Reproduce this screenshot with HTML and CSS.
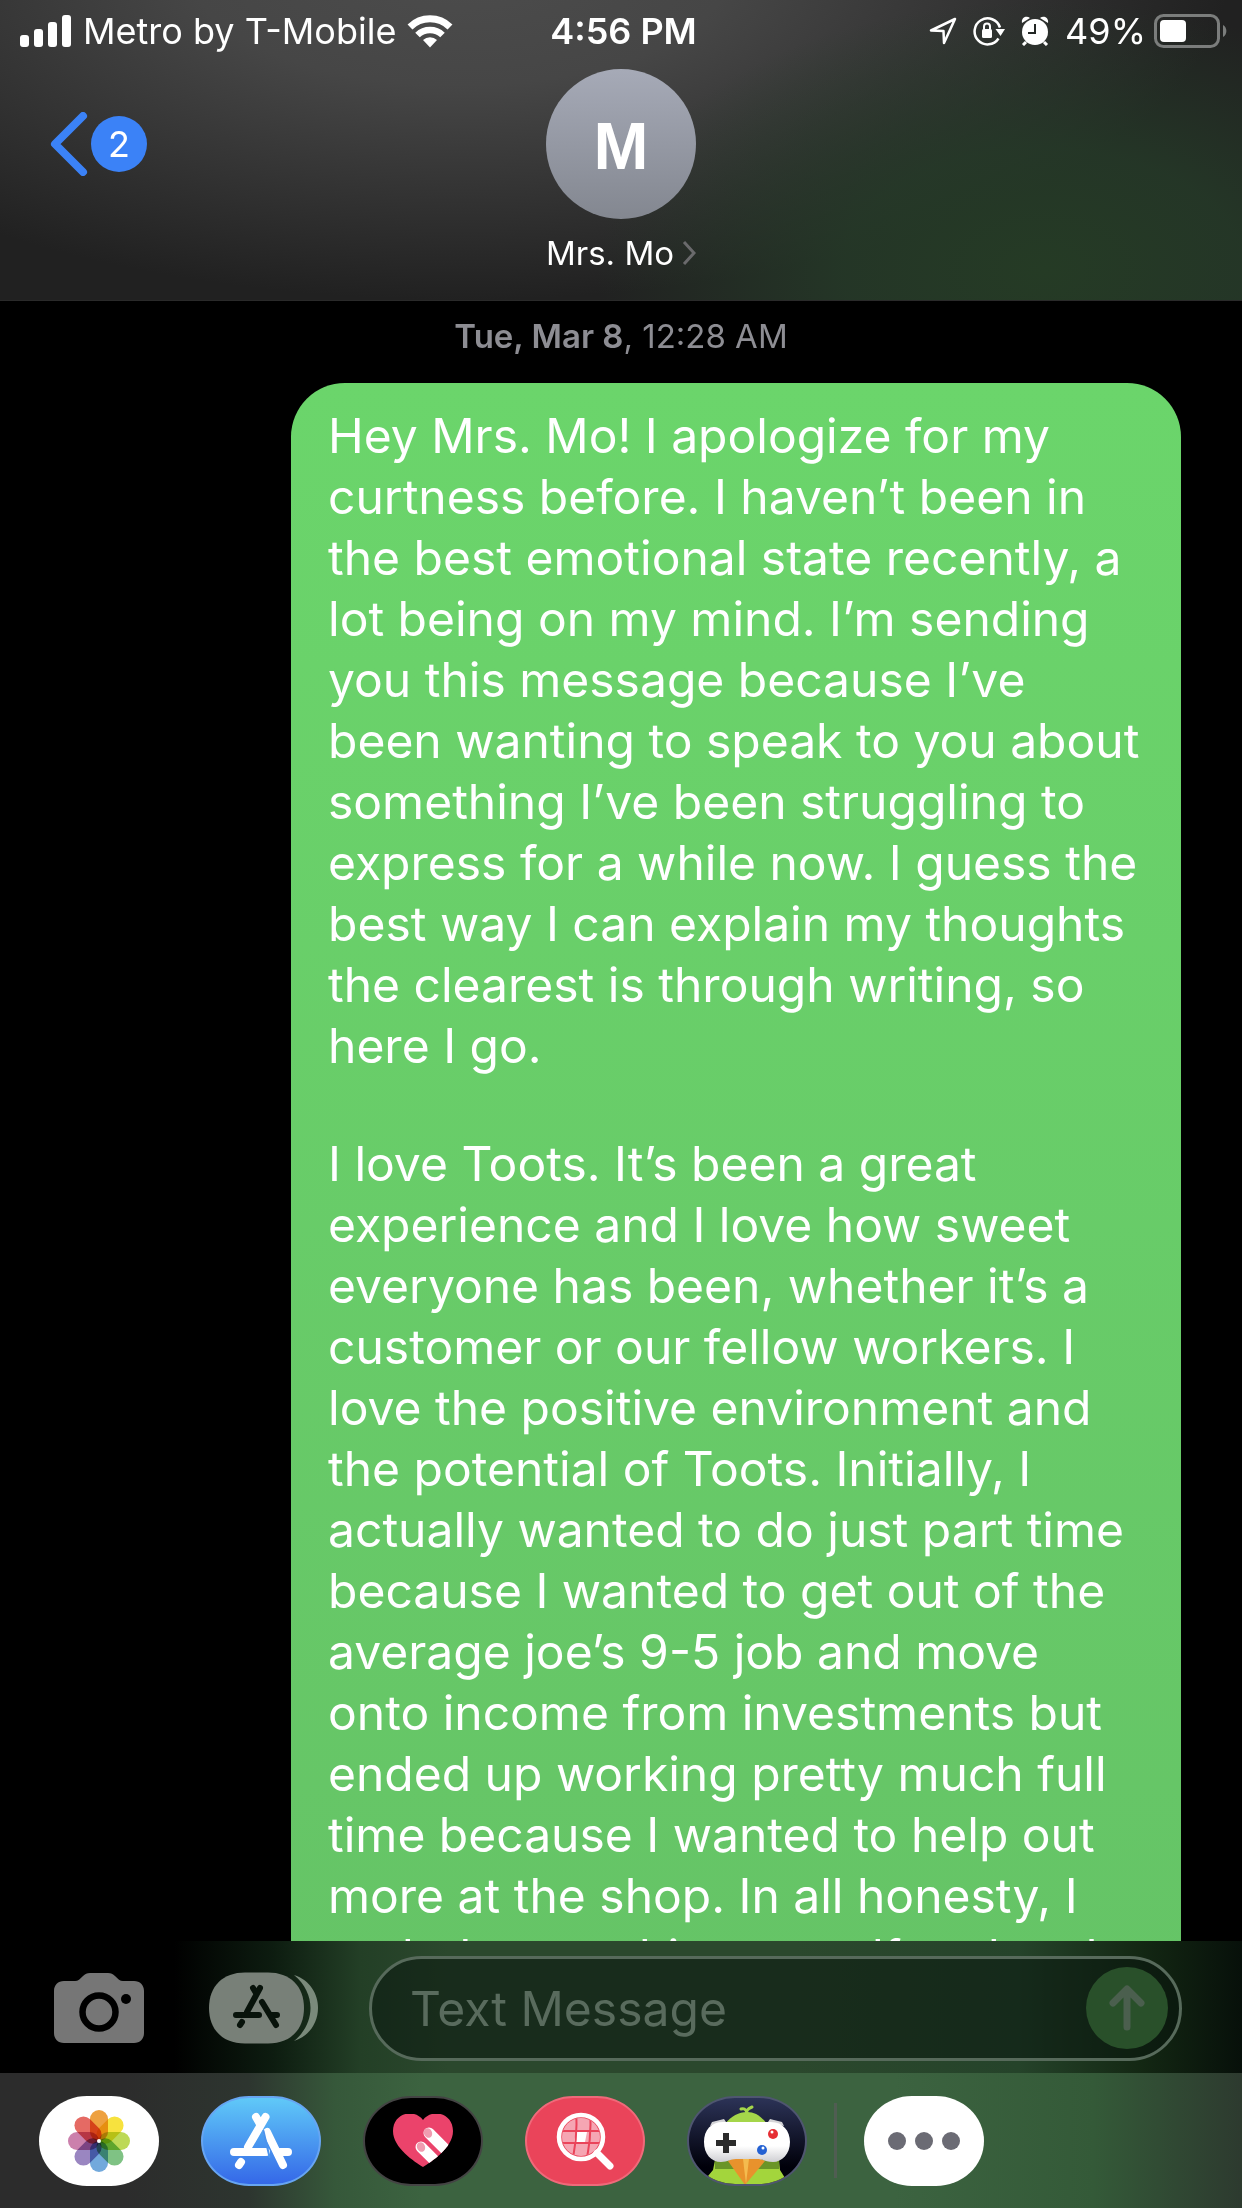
FILE: index.html
```
<!DOCTYPE html>
<html lang="en">
<head>
    <meta charset="UTF-8">
    <meta name="viewport" content="width=device-width, initial-scale=1.0">
    <title>Mrs. Mo</title>
    <link rel="stylesheet" href="styles.css">
</head>
<body>
    <!-- Header -->
    <header class="header">
        <div class="status-bar">
            <div class="status-left">
                <svg width="52" height="32" viewBox="0 0 52 32" fill="#fff">
                    <rect x="0" y="20" width="9" height="12" rx="3"/>
                    <rect x="14" y="14" width="9" height="18" rx="3"/>
                    <rect x="28" y="7" width="9" height="25" rx="3"/>
                    <rect x="42" y="0" width="9" height="32" rx="3"/>
                </svg>
                <span>Metro by T-Mobile</span>
                <svg width="46" height="34" viewBox="0 0 46 34">
                    <path d="M3 13a28.500 28.500 0 0 1 40 0" fill="none" stroke="#fff" stroke-width="7"/>
                    <path d="M10.500 21a18 18 0 0 1 25 0" fill="none" stroke="#fff" stroke-width="6.500"/>
                    <path d="M16 26a10.500 10.500 0 0 1 14 0l-7 7.500z" fill="#fff"/>
                </svg>
            </div>
            <div class="status-time">4:56 PM</div>
            <div class="status-right">
                <svg width="28" height="28" viewBox="0 0 28 28" fill="none" stroke="#fff" stroke-width="2.500" stroke-linejoin="round">
                    <path d="M26 2L2 13.500l12.500.5.500 12z"/>
                </svg>
                <svg width="32" height="30" viewBox="0 0 32 30">
                    <path d="M25.500 22.500a13 13 0 1 1 1.500-11" fill="none" stroke="#fff" stroke-width="2.500"/>
                    <path d="M22.500 13h9.500l-4.500 7z" fill="#fff"/>
                    <rect x="9" y="13" width="10" height="9" rx="1.500" fill="#fff"/>
                    <path d="M11 13v-2.500a3 3 0 0 1 6 0V13" fill="none" stroke="#fff" stroke-width="2"/>
                </svg>
                <svg width="28" height="30" viewBox="0 0 28 30">
                    <circle cx="14" cy="16" r="13" fill="#fff"/>
                    <path d="M1 7C0 2 5-1 9 2zM27 7c1-5-4-8-8-5z" fill="#fff"/>
                    <path d="M5 26l-3 3M23 26l3 3" stroke="#fff" stroke-width="3"/>
                    <path d="M14 8v9H7" fill="none" stroke="#222624" stroke-width="2"/>
                </svg>
                <span>49%</span>
                <svg class="battery" width="73" height="34" viewBox="0 0 73 34">
                    <rect x="1.500" y="1.500" width="63" height="31" rx="8" fill="none" stroke="#7b7d7c" stroke-width="3"/>
                    <rect x="6" y="6" width="26" height="22" rx="4" fill="#fff"/>
                    <path d="M69 11a7 7 0 0 1 0 12z" fill="#7b7d7c"/>
                </svg>
            </div>
        </div>
        <div class="nav">
            <a class="back" href="#" aria-label="Back">
                <svg width="38" height="64" viewBox="0 0 38 64" fill="none" stroke="#3b82f7" stroke-width="8" stroke-linecap="round" stroke-linejoin="round">
                    <path d="M33 4L5 32l28 28"/>
                </svg>
                <span class="unread">2</span>
            </a>
            <a class="contact" href="#">
                <span class="avatar">M</span>
                <span class="contact-name">Mrs. Mo
                    <svg width="14" height="24" viewBox="0 0 14 24" fill="none" stroke="#6a6a6c" stroke-width="3">
                        <path d="M2 1l10 11L2 23"/>
                    </svg>
                </span>
            </a>
        </div>
    </header>

    <!-- Conversation -->
    <main class="conversation">
        <div class="date"><b>Tue, Mar 8</b>, 12:28 AM</div>
        <div class="bubble">
            <p>Hey Mrs. Mo! I apologize for my<br>
            curtness before. I haven’t been in<br>
            the best emotional state recently, a<br>
            lot being on my mind. I’m sending<br>
            you this message because I’ve<br>
            been wanting to speak to you about<br>
            something I’ve been struggling to<br>
            express for a while now. I guess the<br>
            best way I can explain my thoughts<br>
            the clearest is through writing, so<br>
            here I go.</p>
            <p>I love Toots. It’s been a great<br>
            experience and I love how sweet<br>
            everyone has been, whether it’s a<br>
            customer or our fellow workers. I<br>
            love the positive environment and<br>
            the potential of Toots. Initially, I<br>
            actually wanted to do just part time<br>
            because I wanted to get out of the<br>
            average joe’s 9-5 job and move<br>
            onto income from investments but<br>
            ended up working pretty much full<br>
            time because I wanted to help out<br>
            more at the shop. In all honesty, I<br>
            ended up pushing myself and took</p>
        </div>
    </main>

    <!-- Message box -->
    <form class="compose">
        <button class="tool" type="button" aria-label="Camera">
            <svg width="90" height="70" viewBox="0 0 90 70">
                <path d="M10 8h11c3 0 5-2 8-5 2-2 4-3 7-3h18c3 0 5 1 7 3 3 3 5 5 8 5h11c6 0 10 4 10 10v42c0 6-4 10-10 10H10C4 70 0 66 0 60V18C0 12 4 8 10 8z" fill="#767676"/>
                <circle cx="45" cy="39" r="16.500" fill="none" stroke="#000" stroke-width="6.500"/>
                <circle cx="72" cy="26" r="5" fill="#000"/>
            </svg>
        </button>
        <button class="tool" type="button" aria-label="Apps">
            <svg width="110" height="72" viewBox="0 0 110 72">
                <path d="M36 .500h23C81 .500 95 14 95 36S81 71.500 59 71.500H36C14 71.500 0 58 0 36S14 .500 36 .500z" fill="#788078"/>
                <path d="M85 3c32 10 32 56 0 66 22-18 22-48 0-66z" fill="#7a8a7b"/>
                <g fill="none" stroke="#08130b" stroke-linecap="round" stroke-width="6">
                    <path d="M51 16L38 40M44 16l3 5M27 43h23M62 43h6M33 50l-2 3"/>
                    <path d="M53 30l14 23"/>
                </g>
            </svg>
        </button>
        <div class="field">
            <input type="text" placeholder="Text Message" aria-label="Text Message">
            <button class="send" type="submit" aria-label="Send">
                <svg width="36" height="46" viewBox="0 0 36 46" fill="none" stroke="#4b5f4e" stroke-width="7" stroke-linecap="round" stroke-linejoin="round">
                    <path d="M18 42V5M4 18L18 4l14 14"/>
                </svg>
            </button>
        </div>
    </form>

    <!-- App drawer -->
    <nav class="drawer">
        <button class="app photos" type="button" aria-label="Photos">
            <svg width="62" height="62" viewBox="-31 -31 62 62">
                <g class="petals">
                    <rect x="-9" y="-31" width="18" height="31" rx="9" fill="#eea13f"/>
                    <rect x="-9" y="-31" width="18" height="31" rx="9" fill="#f7e23e" transform="rotate(45)"/>
                    <rect x="-9" y="-31" width="18" height="31" rx="9" fill="#bdd957" transform="rotate(90)"/>
                    <rect x="-9" y="-31" width="18" height="31" rx="9" fill="#7fc284" transform="rotate(135)"/>
                    <rect x="-9" y="-31" width="18" height="31" rx="9" fill="#72a9dc" transform="rotate(180)"/>
                    <rect x="-9" y="-31" width="18" height="31" rx="9" fill="#9a86c1" transform="rotate(225)"/>
                    <rect x="-9" y="-31" width="18" height="31" rx="9" fill="#cb80ac" transform="rotate(270)"/>
                    <rect x="-9" y="-31" width="18" height="31" rx="9" fill="#e56a64" transform="rotate(315)"/>
                </g>
                <circle r="2" fill="#fff"/>
            </svg>
        </button>
        <button class="app store" type="button" aria-label="App Store">
            <svg width="62" height="58" viewBox="0 0 62 58" fill="none" stroke="#fff" stroke-width="8" stroke-linecap="round">
                <path d="M35.500 5L18 35M26 5l4 7M4 40h32M50 40h8M11 50l-2 3"/>
                <path d="M37 20l16 33"/>
                <path d="M33.500 19l6 26" stroke="#4b93ec" stroke-width="2"/>
            </svg>
        </button>
        <button class="app touch" type="button" aria-label="Digital Touch">
            <svg width="60" height="54" viewBox="0 0 60 54">
                <defs>
                    <clipPath id="heart"><path d="M30 53C22 48 0 34 0 17 0-1 21-6 30 6 39-6 60-1 60 17c0 17-22 31-30 36z"/></clipPath>
                </defs>
                <g clip-path="url(#heart)">
                    <rect width="60" height="54" fill="#eb436b"/>
                    <g fill="none" stroke="#fff" stroke-width="11" stroke-linecap="round">
                        <path d="M36 19l27 27M28 33l25 25"/>
                    </g>
                    <ellipse cx="35" cy="19" rx="4" ry="5" fill="#f09cb0" transform="rotate(-25 35 19)"/>
                    <ellipse cx="28" cy="33" rx="4" ry="5" fill="#f09cb0" transform="rotate(-25 28 33)"/>
                </g>
            </svg>
        </button>
        <button class="app search" type="button" aria-label="Images">
            <svg width="58" height="58" viewBox="0 0 58 58">
                <defs>
                    <clipPath id="lens"><circle cx="25" cy="25" r="19"/></clipPath>
                </defs>
                <circle cx="25" cy="25" r="19" fill="#f5a6b3"/>
                <path d="M20 20h11l-2 10H18z" fill="#fff"/>
                <g clip-path="url(#lens)" fill="none" stroke="#ea445a" stroke-width="2">
                    <path d="M0 19h50M0 31h50M20 0q2 25-4 50M34 0q2 25-4 50"/>
                </g>
                <circle cx="25" cy="25" r="22" fill="none" stroke="#fff" stroke-width="4.500"/>
                <path d="M41 41l13 13" stroke="#fff" stroke-width="7" stroke-linecap="round"/>
            </svg>
        </button>
        <button class="app pigeon" type="button" aria-label="GamePigeon">
            <svg width="120" height="90" viewBox="0 0 120 90">
                <defs>
                    <linearGradient id="pad" x1="0" y1="0" x2="0" y2="1">
                        <stop offset="0.600" stop-color="#fff"/>
                        <stop offset="1" stop-color="#cfcfd3"/>
                    </linearGradient>
                </defs>
                <path d="M28 64h64l1 10 5 8-4 8H26l-5-10 5-6z" fill="#a3d53c"/>
                <path d="M28 64h64v9H28z" fill="#6a9527"/>
                <path d="M38 28c6-8 14-12 22-12s14 4 20 12z" fill="#a5d64a"/>
                <path d="M60 18c-1-3 0-5 5-7M60 16c-2-3-3-4-6-3" fill="none" stroke="#a5d64a" stroke-width="3" stroke-linecap="round"/>
                <path d="M41 65l17 24 20-24-8-4H48z" fill="#e8922c"/>
                <path d="M56 63h6l-3 25z" fill="#f4bb4f"/>
                <path d="M23 30l2-4 12-3 2 3zM97 30l-2-4-12-3-2 3z" fill="#d5d5d8"/>
                <path d="M36 26h48c12 0 19 9 19 20 0 12-8 20-17 20-7 0-10-3-16-3H49c-6 0-8 3-15 3-10 0-17-8-17-20s7-20 19-20z" fill="url(#pad)"/>
                <path d="M39 37v20M29 47h20" stroke="#2b2b2b" stroke-width="6"/>
                <circle cx="86" cy="38" r="5" fill="#e62e34"/>
                <circle cx="75" cy="54" r="5" fill="#2461d3"/>
                <circle cx="85" cy="36" r="1.500" fill="#fff"/>
                <circle cx="76" cy="52" r="1.500" fill="#fff"/>
            </svg>
        </button>
        <span class="divider"></span>
        <button class="app more" type="button" aria-label="More">
            <svg width="72" height="18" viewBox="0 0 72 18" fill="#6b6b74">
                <circle cx="9" cy="9" r="9"/>
                <circle cx="36" cy="9" r="9"/>
                <circle cx="63" cy="9" r="9"/>
            </svg>
        </button>
    </nav>
</body>
</html>
```
FILE: styles.css
```
* {
    box-sizing: border-box;
}

body {
    margin: 0;
    height: 100vh;
    display: flex;
    flex-direction: column;
    background-color: #000;
    color: #fff;
    font-family: Inter, "Liberation Sans", sans-serif;
    overflow: hidden;
}

a {
    color: inherit;
    text-decoration: none;
}

button {
    padding: 0;
    border: none;
    background: none;
    cursor: pointer;
}

svg {
    display: block;
    flex: none;
}

/* Header */
.header {
    flex: none;
    padding-bottom: 25px;
    background:
        radial-gradient(ellipse 36% 90% at 84% 90%, #253b25 0%, rgba(37, 59, 40, 0.8) 45%, rgba(33, 36, 34, 0) 100%),
        radial-gradient(ellipse 62% 110% at 37% -10%, #4c4c4c 0%, #464646 35%, rgba(33, 33, 33, 0) 100%),
        #212121;
    border-bottom: 1px solid #2a2a2a;
}

.status-bar {
    display: grid;
    grid-template-columns: 1fr auto 1fr;
    align-items: center;
    height: 62px;
    padding: 0 15px 0 20px;
    font-size: 36px;
}

.status-left,
.status-right {
    display: flex;
    align-items: center;
    gap: 11px;
}

.status-right {
    justify-content: flex-end;
    gap: 16px;
}

.status-time {
    font-weight: 600;
}

.battery {
    margin-left: -8px;
}

.nav {
    display: grid;
    grid-template-columns: 1fr auto 1fr;
    padding: 7px 50px 0;
}

.back {
    display: flex;
    align-items: center;
    gap: 3px;
    height: 150px;
}

.unread {
    width: 56px;
    height: 56px;
    border-radius: 50%;
    background-color: #3b82f7;
    font-size: 36px;
    line-height: 56px;
    text-align: center;
}

.contact {
    display: flex;
    flex-direction: column;
    align-items: center;
    gap: 12px;
}

.avatar {
    width: 150px;
    height: 150px;
    border-radius: 50%;
    background: linear-gradient(#a6aab7, #838790);
    font-family: "Liberation Sans", sans-serif;
    font-size: 66px;
    font-weight: bold;
    line-height: 154px;
    text-align: center;
}

.contact-name {
    display: flex;
    align-items: center;
    gap: 8px;
    font-size: 33px;
    line-height: 44px;
}

/* Conversation */
.conversation {
    flex: 1;
    min-height: 0;
    overflow: hidden;
    padding: 13px 61px 0;
}

.date {
    color: #8d8d93;
    font-size: 33px;
    line-height: 44px;
    text-align: center;
}

.date b {
    font-weight: 600;
}

.bubble {
    width: fit-content;
    min-width: 890px;
    margin: 25px 0 0 auto;
    padding: 22px 37px;
    border-radius: 54px;
    background: linear-gradient(#6bd56b, #65c366);
    font-size: 48px;
    line-height: 61px;
    white-space: nowrap;
}

.bubble p {
    margin: 0 0 57px;
}

/* Message box */
.compose {
    flex: none;
    display: flex;
    align-items: center;
    height: 132px;
    padding: 2px 60px 0 54px;
    background: linear-gradient(90deg, #000 14%, #0d1c10 22%, #233f26 29%, #2b482d 36%, #2b482d 64%, #25432a 82%, #132713 92%, #07100a 100%);
}

.tool {
    margin-right: 65px;
}

.tool + .tool {
    margin-right: 50px;
}

.field {
    flex: 1;
    min-width: 0;
    display: flex;
    align-items: center;
    height: 105px;
    padding: 0 11px 0 38px;
    border: 3px solid #576a5b;
    border-radius: 53px;
    background-color: rgba(10, 22, 14, 0.55);
}

.field input {
    flex: 1;
    min-width: 0;
    padding: 0;
    border: none;
    outline: none;
    background: none;
    color: #fff;
    font: inherit;
    font-size: 48px;
}

.field input::placeholder {
    color: #596b5d;
    opacity: 1;
}

.send {
    flex: none;
    display: flex;
    align-items: center;
    justify-content: center;
    width: 82px;
    height: 82px;
    border-radius: 50%;
    background-color: #29502a;
}

/* App drawer */
.drawer {
    flex: none;
    display: flex;
    align-items: center;
    gap: 42px;
    height: 135px;
    padding: 0 39px;
    background: linear-gradient(90deg, #2c2c2c 10%, #2d352f 20%, #36583a 27%, #3c6340 34%, #3c6340 72%, #345a38 88%, #2d3a2f 100%);
}

.app {
    flex: none;
    display: flex;
    align-items: center;
    justify-content: center;
    width: 120px;
    height: 90px;
    border-radius: 48px / 45px;
    overflow: hidden;
}

.photos,
.more {
    background-color: #fff;
}

.petals rect {
    mix-blend-mode: multiply;
}

.store {
    background: linear-gradient(#60c9f8, #3568e8);
    border: 2px solid #67a5f2;
}

.touch {
    background-color: #000;
    border: 2px solid #444;
}

.search {
    background-color: #ea445a;
    border: 2px solid #f0697a;
}

.pigeon {
    background: linear-gradient(#2c3357, #00000a 80%);
    border: 2px solid #4f5670;
}

.divider {
    width: 3px;
    height: 75px;
    margin: 0 -15px;
    background-color: #505d52;
}
```
